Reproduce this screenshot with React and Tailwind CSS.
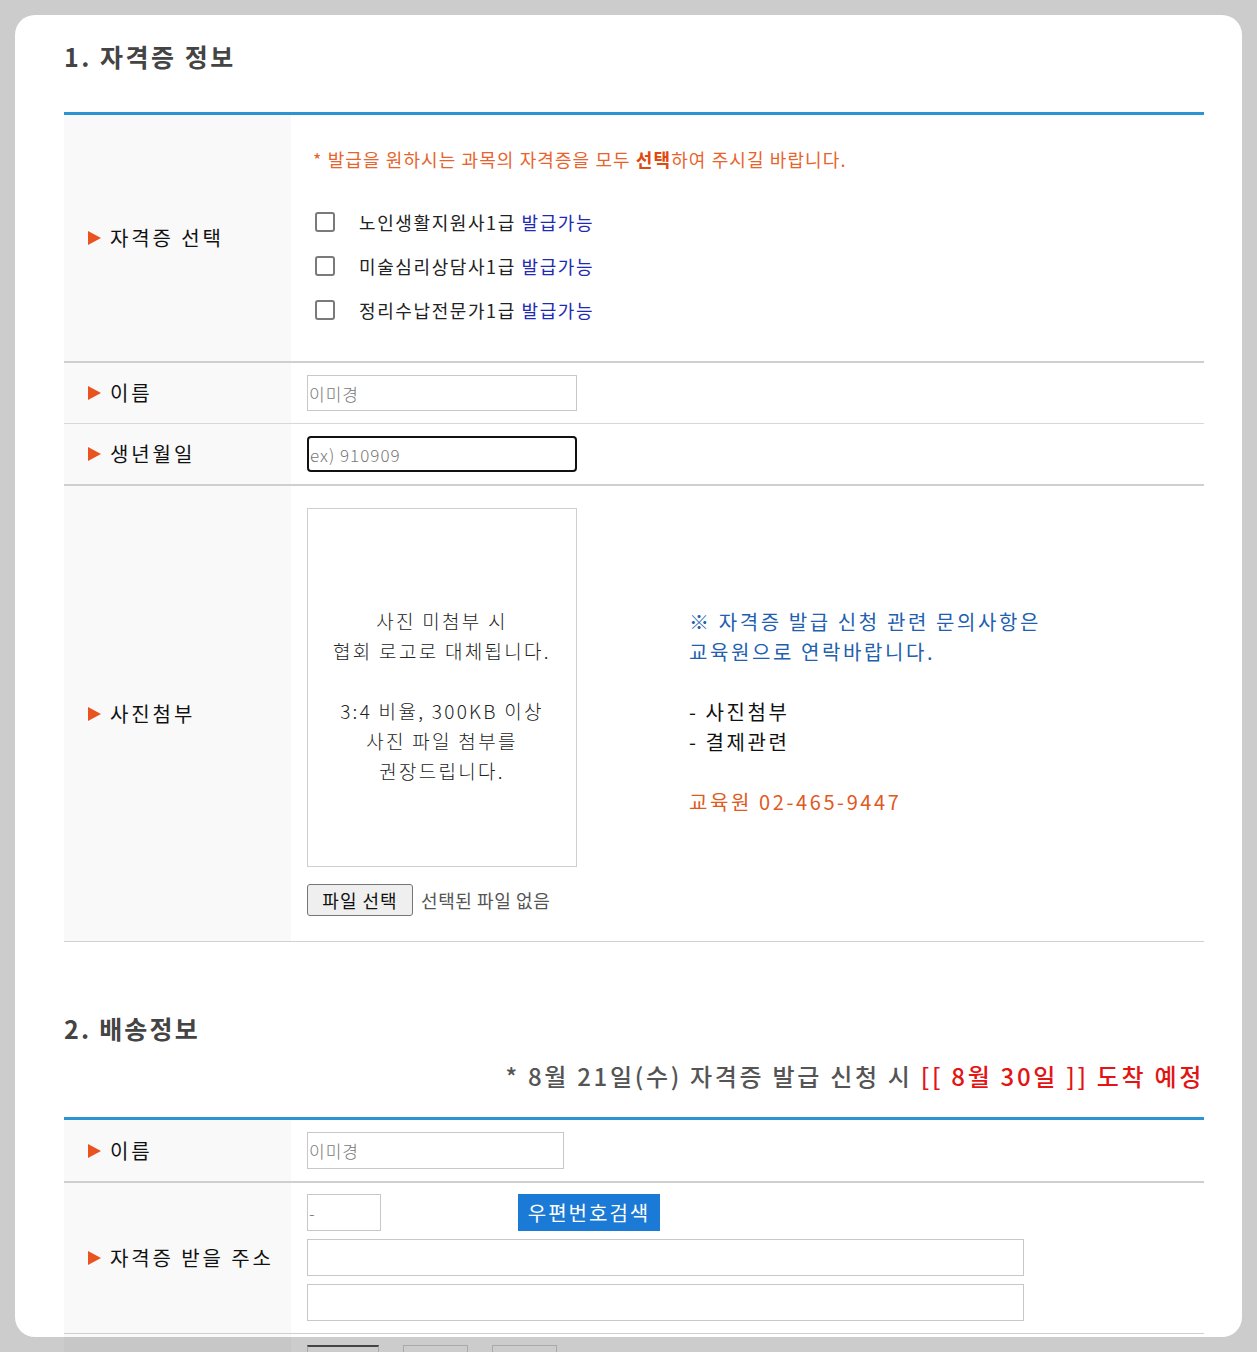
import React from "react";

const Tri = () => (
  <svg width="13" height="14" viewBox="0 0 13 14" className="shrink-0">
    <polygon points="0,0 13,7 0,14" fill="#e8531f" />
  </svg>
);

const Label = ({ children }) => (
  <div className="w-[227px] shrink-0 bg-black/[0.025] flex items-center pl-[24px] gap-[9px] text-[20px] leading-[28px] tracking-[2.9px] text-[#111]">
    {children ? <Tri /> : null}
    <span>{children}</span>
  </div>
);

const Check = ({ name }) => (
  <div className="flex items-center h-[44px]">
    <div className="ml-[2px] w-[20px] h-[20px] border-2 border-[#7a7a7a] rounded-[3px] bg-white shrink-0" />
    <span className="ml-[24px] text-[18px] leading-[24px] tracking-[1.6px] text-[#222]">
      {name} <span className="text-[#2229b3]">발급가능</span>
    </span>
  </div>
);

const Field = ({ w, h = "h-[36px]", ph, extra = "border border-[#c8c8c8]" }) => (
  <input
    readOnly
    placeholder={ph}
    className={`${w} ${h} ${extra} bg-transparent pl-[1px] text-[17px] tracking-[1px] font-light placeholder:text-[#777] outline-none`}
  />
);

export default function App() {
  return (
    <div className="h-[1352px] overflow-hidden bg-[#cccccc] p-[15px] font-['Noto_Sans_CJK_KR',sans-serif]">
      <div className="h-[1322px] rounded-[20px] bg-white pl-[49px] pr-[38px] pt-[24px]">
        <h2 className="text-[25px] leading-[34px] font-bold tracking-[2.5px] text-[#444]">1. 자격증 정보</h2>

        <div className="mt-[39px] border-t-[3px] border-[#2b95d3]">
          {/* 자격증 선택 */}
          <div className="flex border-b-2 border-[#cfcfcf]">
            <Label>자격증 선택</Label>
            <div className="pl-[22px] pt-[32px] pb-[29px]">
              <p className="text-[18px] leading-[24px] tracking-[1.1px] text-[#e8632b]">
                * 발급을 원하시는 과목의 자격증을 모두 <b className="text-[#e0480e]">선택</b>하여 주시길 바랍니다.
              </p>
              <div className="mt-[29px]">
                <Check name="노인생활지원사1급" />
                <Check name="미술심리상담사1급" />
                <Check name="정리수납전문가1급" />
              </div>
            </div>
          </div>

          {/* 이름 */}
          <div className="flex h-[61px] border-b border-[#d8d8d8]">
            <Label>이름</Label>
            <div className="flex items-center pl-[16px]">
              <Field w="w-[270px]" ph="이미경" />
            </div>
          </div>

          {/* 생년월일 */}
          <div className="flex h-[62px] border-b-2 border-[#cfcfcf]">
            <Label>생년월일</Label>
            <div className="flex items-center pl-[16px]">
              <Field w="w-[270px]" ph="ex) 910909" extra="border-2 border-[#111] rounded-[4px]" />
            </div>
          </div>

          {/* 사진첨부 */}
          <div className="flex border-b border-[#d0d0d0]">
            <Label>사진첨부</Label>
            <div className="flex pl-[16px] pt-[22px] pb-[25px]">
              <div>
                <div className="w-[270px] h-[359px] border border-[#cfcfcf] flex items-center justify-center pt-[17px] text-center text-[19px] leading-[30px] tracking-[2.3px] font-light text-[#222]">
                  <div>
                    사진 미첨부 시<br />
                    협회 로고로 대체됩니다.<br />
                    <br />
                    3:4 비율, 300KB 이상<br />
                    사진 파일 첨부를<br />
                    권장드립니다.
                  </div>
                </div>
                <div className="mt-[17px] flex items-center">
                  <div className="w-[106px] h-[32px] border border-[#767676] rounded-[3px] bg-[#efefef] flex items-center justify-center text-[18px] tracking-[1px] text-[#111]">
                    파일 선택
                  </div>
                  <span className="ml-[8px] text-[18px] tracking-[0.6px] text-[#555]">선택된 파일 없음</span>
                </div>
              </div>
              <div className="ml-[112px] self-center text-[20px] leading-[30px] tracking-[2.6px]">
                <p className="text-[#2160b0]">
                  ※ 자격증 발급 신청 관련 문의사항은<br />
                  교육원으로 연락바랍니다.
                </p>
                <br />
                <p className="text-[#111]">
                  - 사진첨부<br />- 결제관련
                </p>
                <br />
                <p className="text-[#e05a1e]">교육원 02-465-9447</p>
              </div>
            </div>
          </div>
        </div>

        <h2 className="mt-[69px] text-[25px] leading-[34px] font-bold tracking-[2.2px] text-[#444]">2. 배송정보</h2>
        <p className="mt-[14px] text-right text-[24px] leading-[34px] font-medium tracking-[2.7px] text-[#555]">
          * 8월 21일(수) 자격증 발급 신청 시 <span className="text-[#e31414]">[[ 8월 30일 ]] 도착 예정</span>
        </p>

        <div className="mt-[24px] border-t-[3px] border-[#2b95d3]">
          <div className="flex h-[63px] border-b-2 border-[#cfcfcf]">
            <Label>이름</Label>
            <div className="flex items-center pl-[16px]">
              <Field w="w-[257px]" h="h-[37px]" ph="이미경" />
            </div>
          </div>

          <div className="flex border-b border-[#cfcfcf]">
            <Label>자격증 받을 주소</Label>
            <div className="pl-[16px] pt-[11px] pb-[12px] flex flex-col gap-[8px]">
              <div className="flex items-center">
                <Field w="w-[74px]" h="h-[37px]" ph="-" />
                <div className="ml-[137px] w-[142px] h-[37px] bg-[#1a7ad6] text-white text-[20px] tracking-[2px] flex items-center justify-center">
                  우편번호검색
                </div>
              </div>
              <Field w="w-[717px]" h="h-[37px]" ph="" />
              <Field w="w-[717px]" h="h-[37px]" ph="" />
            </div>
          </div>

          <div className="flex h-[60px]">
            <Label />
            <div className="flex pl-[16px] pt-[11px] gap-[24px]">
              <div className="w-[72px] h-[37px] border border-[#aaa] border-t-2 border-t-[#444]" />
              <div className="w-[65px] h-[37px] border border-[#aaa]" />
              <div className="w-[65px] h-[37px] border border-[#aaa]" />
            </div>
          </div>
        </div>
      </div>
    </div>
  );
}
